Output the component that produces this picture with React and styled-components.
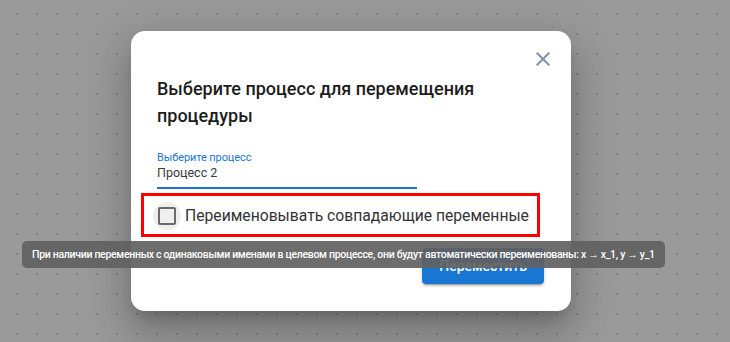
import React from 'react';
import styled, { createGlobalStyle } from 'styled-components';

const GlobalStyle = createGlobalStyle`
  html, body {
    margin: 0;
    padding: 0;
  }
  body {
    font-family: Roboto, 'Noto Sans', sans-serif;
    background: #9a9a9a;
  }
`;

const Backdrop = styled.div`
  position: relative;
  display: flex;
  align-items: center;
  height: 342px;
  padding-left: 131px;
  box-sizing: border-box;
  overflow: hidden;
  background-color: #9a9a9a;
  background-image: radial-gradient(circle at center, #838383 0.9px, transparent 1.3px);
  background-size: 20px 20px;
  background-position: 7px 4px;
`;

const Dialog = styled.div`
  position: relative;
  width: 440px;
  height: 280px;
  box-sizing: border-box;
  padding: 44px 27px 27px 26px;
  background: #fff;
  border-radius: 14px;
  box-shadow: 0 11px 15px -7px rgba(0, 0, 0, 0.2), 0 24px 38px 3px rgba(0, 0, 0, 0.14),
    0 9px 46px 8px rgba(0, 0, 0, 0.12);
  display: flex;
  flex-direction: column;
`;

const CloseButton = styled.button`
  position: absolute;
  top: 16px;
  right: 16px;
  width: 24px;
  height: 24px;
  padding: 0;
  border: none;
  background: none;
  color: #7f92b1;
  display: flex;
  align-items: center;
  justify-content: center;
  cursor: pointer;
`;

const Title = styled.h2`
  margin: 0;
  font-size: 18px;
  font-weight: 500;
  line-height: 27px;
  color: #1d1d1d;
`;

const Field = styled.div`
  margin-top: 23px;
  width: 260px;
  padding-bottom: 4px;
  border-bottom: 2px solid #1976d2;
`;

const FieldLabel = styled.div`
  font-size: 11px;
  line-height: 12px;
  color: #1976d2;
  letter-spacing: -0.1px;
`;

const FieldValue = styled.div`
  margin-top: -1px;
  font-size: 12.5px;
  line-height: 20px;
  color: #3a3a3a;
`;

const Highlight = styled.div`
  margin: 4px 0 0 -16px;
  width: 399px;
  box-sizing: border-box;
  border: 3px solid #ff0000;
  padding: 6px 0 4px 9px;
  display: flex;
  align-items: center;
`;

const CheckCircle = styled.span`
  width: 28px;
  height: 28px;
  border-radius: 50%;
  background: #eeeeee;
  color: #6a6a6a;
  display: flex;
  align-items: center;
  justify-content: center;
  flex-shrink: 0;
`;

const CheckLabel = styled.span`
  margin-left: 4px;
  font-size: 15.7px;
  line-height: 24px;
  color: #333;
  white-space: nowrap;
`;

const Actions = styled.div`
  margin-top: 11px;
  display: flex;
  justify-content: flex-end;
`;

const PrimaryButton = styled.button`
  height: 36px;
  padding: 0 17px;
  border: none;
  border-radius: 4px;
  background: #1976d2;
  color: #fff;
  font-family: Roboto, sans-serif;
  font-size: 14px;
  font-weight: 500;
  box-shadow: 0 3px 1px -2px rgba(0, 0, 0, 0.2), 0 2px 2px 0 rgba(0, 0, 0, 0.14),
    0 1px 5px 0 rgba(0, 0, 0, 0.12);
`;

const Tooltip = styled.div`
  position: absolute;
  left: 22px;
  top: 241px;
  padding: 6px 10px;
  border-radius: 5px;
  background: rgba(97, 97, 97, 0.92);
  color: #fff;
  font-size: 10.5px;
  font-weight: 500;
  line-height: 15px;
  letter-spacing: -0.3px;
  white-space: nowrap;
`;

const CloseIcon = () => (
  <svg width="24" height="24" viewBox="0 0 24 24" fill="currentColor">
    <path d="M19 6.41 17.59 5 12 10.59 6.41 5 5 6.41 10.59 12 5 17.59 6.41 19 12 13.41 17.59 19 19 17.59 13.41 12z" />
  </svg>
);

const BlankBoxIcon = () => (
  <svg width="24" height="24" viewBox="0 0 24 24" fill="currentColor">
    <path d="M19 5v14H5V5h14m0-2H5c-1.11 0-2 .9-2 2v14c0 1.1.89 2 2 2h14c1.1 0 2-.9 2-2V5c0-1.1-.9-2-2-2z" />
  </svg>
);

const App = () => {
  return (
    <>
      <GlobalStyle />
      <Backdrop>
        <Dialog>
          <CloseButton aria-label="Закрыть">
            <CloseIcon />
          </CloseButton>
          <Title>Выберите процесс для перемещения процедуры</Title>
          <Field>
            <FieldLabel>Выберите процесс</FieldLabel>
            <FieldValue>Процесс 2</FieldValue>
          </Field>
          <Highlight>
            <CheckCircle>
              <BlankBoxIcon />
            </CheckCircle>
            <CheckLabel>Переименовывать совпадающие переменные</CheckLabel>
          </Highlight>
          <Actions>
            <PrimaryButton>Переместить</PrimaryButton>
          </Actions>
        </Dialog>
        <Tooltip>
          При наличии переменных с одинаковыми именами в целевом процессе, они будут автоматически переименованы: x → x_1, y → y_1
        </Tooltip>
      </Backdrop>
    </>
  );
};

export default App;
